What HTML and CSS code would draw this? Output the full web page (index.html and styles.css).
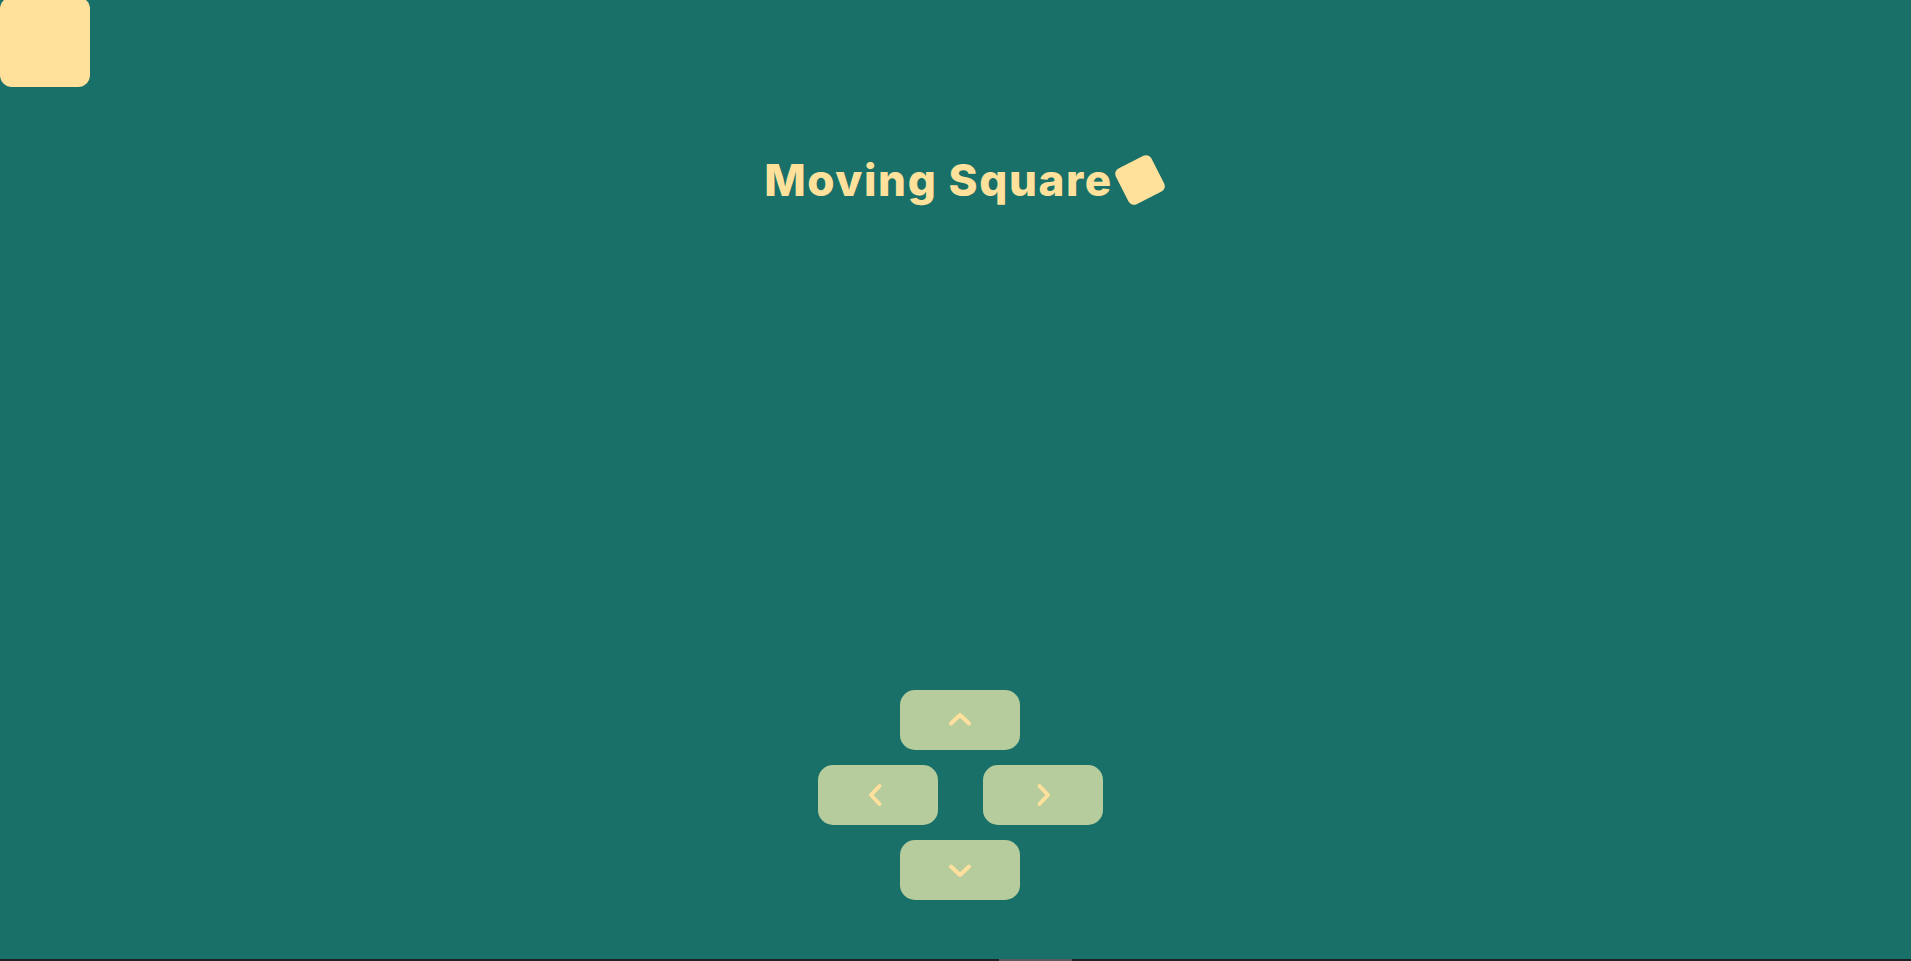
FILE: index.html
```html
<!DOCTYPE html>
<html lang="en">
<head>
<meta charset="utf-8">
<title>Moving Square</title>
<link rel="stylesheet" href="styles.css">
</head>
<body>
  <div class="stage">
    <div class="square"></div>
    <h1 class="title"><span class="title-text">Moving Square</span><span class="title-icon"></span></h1>
    <div class="controls">
      <div class="row">
        <button class="btn" aria-label="up"><svg viewBox="0 0 24 24" width="24" height="24"><path d="M3 15.5 L12 7 L21 15.5"/></svg></button>
      </div>
      <div class="row row-mid">
        <button class="btn btn-left" aria-label="left"><svg viewBox="0 0 24 24" width="24" height="24"><path d="M15.5 3 L7 12 L15.5 21"/></svg></button>
        <button class="btn" aria-label="right"><svg viewBox="0 0 24 24" width="24" height="24"><path d="M8.5 3 L17 12 L8.5 21"/></svg></button>
      </div>
      <div class="row">
        <button class="btn" aria-label="down"><svg viewBox="0 0 24 24" width="24" height="24"><path d="M3 8.5 L12 17 L21 8.5"/></svg></button>
      </div>
    </div>
  </div>
  <div class="scrollbar"><div class="thumb"></div></div>
</body>
</html>
```
FILE: styles.css
```css
html, body {
  margin: 0;
  padding: 0;
}
body {
  background: #197068;
  height: 100vh;
  overflow: hidden;
  display: flex;
  flex-direction: column;
  font-family: Inter, "Open Sans", sans-serif;
}
.stage {
  position: relative;
  width: 1920px;
  flex: 1;
  display: flex;
  flex-direction: column;
  align-items: center;
}
.square {
  position: absolute;
  top: -3px;
  left: 0;
  width: 90px;
  height: 90px;
  border-radius: 12px;
  background: #ffe19c;
}
.title {
  margin: 154px 0 0;
  padding-left: 4px;
  display: flex;
  align-items: center;
  gap: 7px;
  font-size: 44px;
  font-weight: 800;
  line-height: 52px;
  color: #ffe19c;
  letter-spacing: 1.6px;
}
.title-icon {
  display: block;
  width: 40px;
  height: 40px;
  border-radius: 6px;
  background: #ffe19c;
  transform: rotate(-27deg);
}
.controls {
  margin-top: auto;
  padding-bottom: 59px;
  display: flex;
  flex-direction: column;
  gap: 15px;
  align-items: center;
}
.row {
  display: flex;
  justify-content: center;
  gap: 45px;
}
.row-mid {
  padding-left: 1px;
}
.btn {
  width: 120px;
  height: 60px;
  border: 0;
  border-radius: 15px;
  background: #b6cc9c;
  padding: 0;
  display: flex;
  align-items: center;
  justify-content: center;
  cursor: pointer;
}
.btn svg {
  display: block;
  fill: none;
  stroke: #ffe09c;
  stroke-width: 4;
  stroke-linecap: round;
  stroke-linejoin: round;
}
.btn-left svg {
  margin-left: -4px;
}
.scrollbar {
  height: 2px;
  background: #1f2022;
  display: flex;
}
.thumb {
  margin-left: 999px;
  width: 73px;
  background: #5a5a5c;
}
```
